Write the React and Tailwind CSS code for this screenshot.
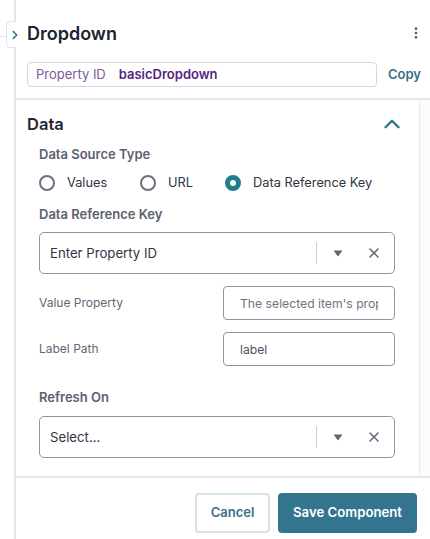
import { ChevronRight, ChevronUp, X } from 'lucide-react';

const SelectBox = ({ text }) => (
  <div className="flex h-[42px] items-center rounded-[5px] border border-[#8f96a3] pl-[10px] pr-[12px]">
    <span className="flex-1 pt-px text-[13.2px] text-[#30363f]">{text}</span>
    <div className="h-[22px] w-px bg-[#c9ced6]" />
    <svg viewBox="0 0 10 7" className="ml-[16px] h-[7px] w-[10px]">
      <path d="M0.5 0.5H9.5L5 6.5Z" fill="#5d6675" />
    </svg>
    <X size={16} strokeWidth={2.2} className="ml-[23px] text-[#5d6675]" />
  </div>
);

const Radio = ({ label, checked, className }) => (
  <label className={`flex items-center ${className}`}>
    {checked ? (
      <span className="h-4 w-4 rounded-full border-[5px] border-[#217f8b] bg-white" />
    ) : (
      <span className="h-4 w-4 rounded-full border-2 border-[#6b7280] bg-white" />
    )}
    <span className="ml-[12px] text-[12.8px] text-[#30363f]">{label}</span>
  </label>
);

const FieldRow = ({ label, children }) => (
  <div className="flex h-[34px] items-center">
    <span className="w-[184px] text-[12px] text-[#5f6774]">{label}</span>
    {children}
  </div>
);

const App = () => {
  return (
    <div className="relative flex h-[539px] w-[430px] overflow-hidden bg-white font-['Inter',sans-serif]">
      <div className="w-[14px] shrink-0" />

      {/* collapse tab on the panel edge */}
      <div className="absolute left-0 top-[36px] h-px w-[6px] bg-[#dfe4ea]" />
      <div className="absolute left-[6px] top-[21px] flex h-[27px] w-[10px] items-center justify-center rounded-l-[5px] border border-r-0 border-[#dfe4ea] bg-white">
        <ChevronRight size={14} strokeWidth={2.6} className="ml-[6px] shrink-0 text-[#2f7186]" />
      </div>

      <div className="flex min-w-0 flex-1 flex-col border-l-2 border-[#e0e6ee]">
        <div className="h-[100px] shrink-0 border-b-2 border-[#e3e6eb] pl-[11px] pr-[9px] pt-[21px]">
          <div className="flex h-[24px] items-center justify-between">
            <h1 className="text-[18px] font-semibold text-[#1b2330]">Dropdown</h1>
            <svg viewBox="0 0 4 14" className="mr-[3px] h-[12px] w-[4px]">
              <circle cx="2" cy="2" r="1.6" fill="#2f7186" />
              <circle cx="2" cy="7" r="1.6" fill="#2f7186" />
              <circle cx="2" cy="12" r="1.6" fill="#2f7186" />
            </svg>
          </div>
          <div className="mt-[17px] flex items-center">
            <div className="flex h-[25px] w-[351px] items-center rounded-[4px] border border-[#e8c9ef] pl-[8px]">
              <span className="text-[13px] text-[#7d5a9c]">Property ID</span>
              <span className="ml-[13px] text-[13px] font-semibold text-[#55257f]">basicDropdown</span>
            </div>
            <button className="ml-[11px] text-[13px] font-semibold text-[#3a7189]">Copy</button>
          </div>
        </div>

        <div className="flex min-h-0 flex-1">
          <div className="w-[404px] shrink-0 border-r border-[#e8eaee] pl-[11px] pr-[24px]">
            <div className="flex h-[48px] items-center justify-between">
              <h2 className="text-[16.5px] font-semibold text-[#1f2733]">Data</h2>
              <ChevronUp size={26} strokeWidth={2.2} className="-mr-[10px] text-[#2f7186]" />
            </div>

            <div className="pl-[12px]">
              <div className="-mt-[2px] text-[13px] font-semibold leading-[16px] text-[#5a6270]">Data Source Type</div>
              <div className="mt-[11px] flex h-[20px] items-center">
                <Radio label="Values" className="w-[101px]" />
                <Radio label="URL" className="w-[85px]" />
                <Radio label="Data Reference Key" checked />
              </div>
              <div className="mt-[13px] text-[13px] font-semibold leading-[16px] text-[#5a6270]">Data Reference Key</div>
              <div className="mt-[10px]">
                <SelectBox text="Enter Property ID" />
              </div>
              <div className="mt-[12px] flex flex-col gap-[12px]">
                <FieldRow label="Value Property">
                  <input
                    readOnly
                    placeholder="The selected item's property"
                    className="h-[34px] w-[172px] rounded-[4px] border border-[#8f96a3] px-[16px] text-[12.2px] placeholder:text-[#6d7480]"
                  />
                </FieldRow>
                <FieldRow label="Label Path">
                  <input
                    readOnly
                    value="label"
                    className="h-[34px] w-[172px] rounded-[4px] border border-[#8f96a3] px-[16px] text-[12.2px] text-[#4a515c]"
                  />
                </FieldRow>
              </div>
              <div className="mt-[23px] text-[13px] font-semibold leading-[16px] text-[#5a6270]">Refresh On</div>
              <div className="mt-[11px]">
                <SelectBox text="Select..." />
              </div>
            </div>
          </div>
          <div className="flex-1 bg-[#fbfbfc]" />
        </div>

        <div className="flex h-[63px] shrink-0 items-start justify-end gap-[8px] border-t-2 border-[#e3e6eb] pr-[13px] pt-[15px]">
          <button className="h-[40px] w-[75px] rounded-[4px] border-2 border-[#d3e3e8] bg-white text-[13px] font-semibold text-[#3a7189]">
            Cancel
          </button>
          <button className="h-[40px] w-[139px] rounded-[4px] bg-[#33758f] text-[13.2px] font-semibold text-white">
            Save Component
          </button>
        </div>
      </div>
    </div>
  );
};

export default App;
